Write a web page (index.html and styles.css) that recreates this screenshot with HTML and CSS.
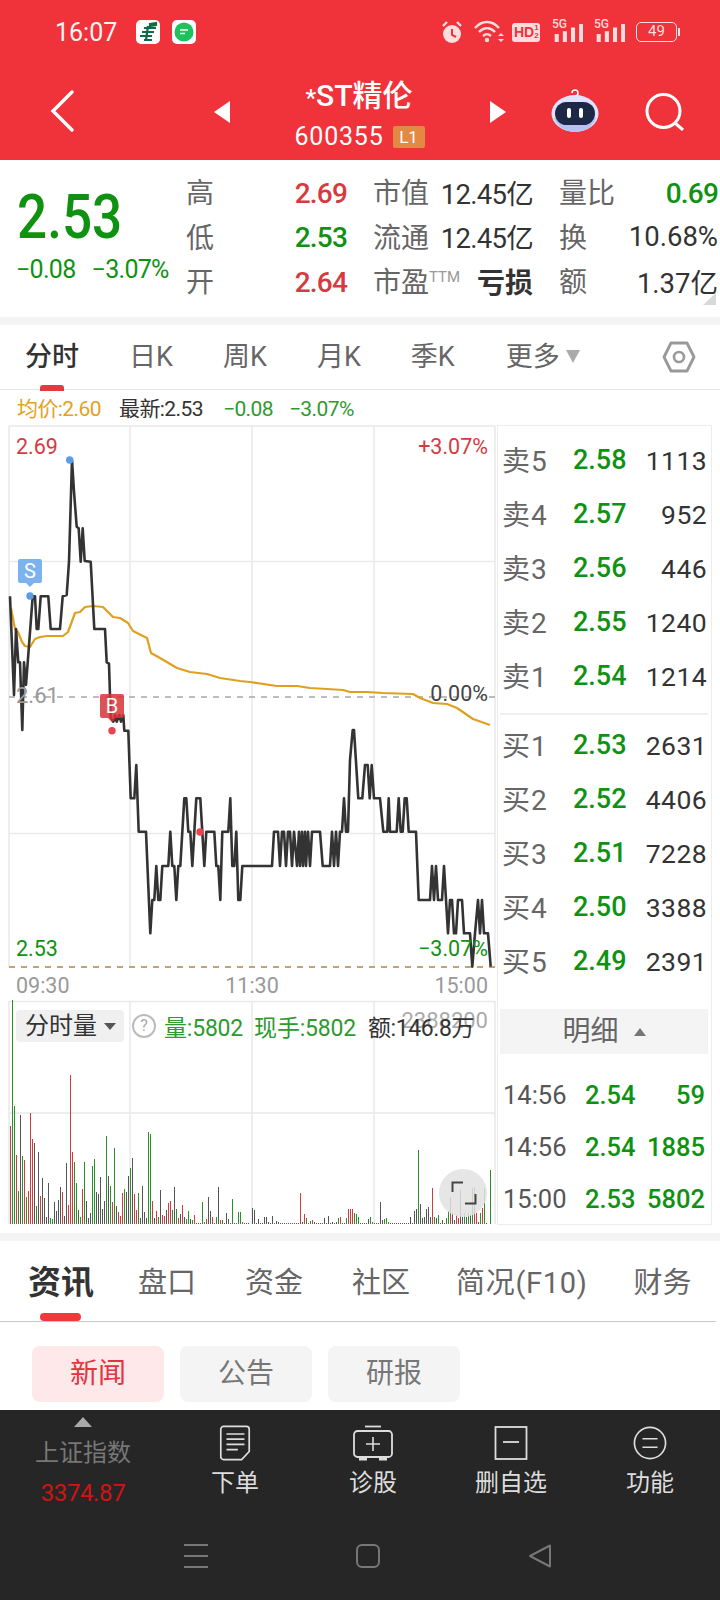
FILE: index.html
```html
<!DOCTYPE html>
<html lang="zh">
<head>
<meta charset="utf-8">
<title>*ST精伦</title>
<link rel="stylesheet" href="styles.css">
</head>
<body>
<div class="page">
  <header class="top">
    <div class="status">
      <span class="clock">16:07</span>
      <svg class="app" viewBox="0 0 24 24"><rect width="24" height="24" rx="5" fill="#fff"/><path d="M14 4l6-1v2l-6 1zM8 8h12M6 12h12M4 16h12M8 20h8M12 6l-2 14" stroke="#0d6b46" stroke-width="2.2" fill="none"/></svg>
      <svg class="app app2" viewBox="0 0 24 24"><rect width="24" height="24" rx="5" fill="#fff"/><circle cx="12" cy="12" r="9.5" fill="#1ec25a"/><path d="M8 10h8M8 13.5h5" stroke="#fff" stroke-width="1.6"/></svg>
      <span class="status-right">
        <svg class="st-alarm" viewBox="0 0 22 24"><circle cx="11" cy="14" r="9" fill="#fdd"/><path d="M11 9v6l4 2" stroke="#f0323b" stroke-width="2" fill="none"/><path d="M2 6l4-4M20 6l-4-4" stroke="#fdd" stroke-width="2.4"/></svg>
        <svg class="st-wifi" viewBox="0 0 30 24"><path d="M1 8c7-8 17-8 24 0M5 12c5-5 11-5 16 0M9 16c3-2.500 5-2.500 8 0" stroke="#fdd" stroke-width="2.400" fill="none"/><circle cx="13" cy="20" r="2.200" fill="#fdd"/><path d="M24 16l3-3 3 3zM24 19l3 3 3-3z" fill="#fdd"/></svg>
        <span class="st-hd">HD<small>1<br>2</small></span>
        <span class="st-sig"><b>5G</b><svg viewBox="0 0 32 20"><path d="M3 11v9M12 8v12M21 4v16M30 0v20" stroke="#fdd" stroke-width="4.500"/></svg></span>
        <span class="st-sig"><b>5G</b><svg viewBox="0 0 32 20"><path d="M3 11v9M12 8v12M21 4v16M30 0v20" stroke="#fdd" stroke-width="4.500"/></svg></span>
        <span class="st-bat"><span class="st-bat-body">49</span><i class="st-bat-tip"></i></span>
      </span>
    </div>
    <div class="nav">
      <svg class="back" viewBox="0 0 24 42"><path d="M22 2L3 21l19 19" stroke="#fff" stroke-width="3.400" fill="none" stroke-linecap="round"/></svg>
      <i class="tri-left"></i>
      <div class="title">
        <div class="name"><span class="star">*</span>ST精伦</div>
        <div class="code"><span>600355</span><span class="badge">L1</span></div>
      </div>
      <i class="tri-right"></i>
      <svg class="robot" viewBox="0 0 48 44"><path d="M21 5a3 3 0 1 1 3 3v2" stroke="#fff" stroke-width="1.600" fill="none"/><ellipse cx="24" cy="25.500" rx="23.500" ry="18.500" fill="#dfe3fb"/><path d="M3 30c3 9 12 14 21 14s18-5 21-14z" fill="#b9c1f2"/><rect x="4" y="14" width="40" height="23" rx="11.500" fill="#1d2746"/><rect x="16" y="20" width="4" height="10" rx="2" fill="#fff"/><rect x="28" y="20" width="4" height="10" rx="2" fill="#fff"/></svg>
      <svg class="search" viewBox="0 0 40 38"><circle cx="18.500" cy="18" r="16.500" stroke="#fff" stroke-width="3" fill="none"/><path d="M30 30l8 7" stroke="#fff" stroke-width="3"/></svg>
    </div>
  </header>

  <section class="quote">
    <div class="price-box">
      <div class="big">2.53</div>
      <div class="chg"><span>−0.08</span><span>−3.07%</span></div>
    </div>
    <div class="stats">
      <div class="cell"><span class="lb">高</span><span class="v1 red">2.69</span></div>
      <div class="cell"><span class="lb">市值</span><span class="v2 tight">12.45亿</span></div>
      <div class="cell"><span class="lb">量比</span><span class="v1 green">0.69</span></div>
      <div class="cell"><span class="lb">低</span><span class="v1 green">2.53</span></div>
      <div class="cell"><span class="lb">流通</span><span class="v2 tight">12.45亿</span></div>
      <div class="cell"><span class="lb">换</span><span class="v2">10.68%</span></div>
      <div class="cell"><span class="lb">开</span><span class="v1 red">2.64</span></div>
      <div class="cell"><span class="lb">市盈<sup class="ttm">TTM</sup></span><span class="v2 strong">亏损</span></div>
      <div class="cell"><span class="lb">额</span><span class="v2">1.37亿</span></div>
    </div>
    <i class="corner"></i>
  </section>
  <div class="strip strip-a"></div>

  <nav class="ktabs">
    <span class="ktab on">分时</span>
    <span class="ktab">日K</span>
    <span class="ktab">周K</span>
    <span class="ktab">月K</span>
    <span class="ktab">季K</span>
    <span class="ktab more">更多<i class="tri-more"></i></span>
    <svg class="hex" viewBox="0 0 34 32"><path d="M9 2h16l7 14-7 14H9L2 16z" stroke="#999" stroke-width="2.800" fill="none" stroke-linejoin="round"/><circle cx="17" cy="16" r="5" stroke="#999" stroke-width="2.600" fill="none"/></svg>
  </nav>

  <div class="info">
    <span class="orange">均价:2.60</span>
    <span class="dark">最新:2.53</span>
    <span class="green2">−0.08</span>
    <span class="green2">−3.07%</span>
  </div>

  <div class="board">
    <div class="left">
      <div class="pchart">
        <svg class="psvg" viewBox="8 425 488 545">
          <path class="grid" d="M9 426H495M9 561.500H495M9 833.500H495M9 426V967M130 426V967M252 426V967M374 426V967M495 426V967"/>
          <path class="midline" d="M9 697H495"/>
          <path class="lowline" d="M9 967H495"/>
          <path class="avg" d="M11 608L15 629L18 632L22 642L25 646L30 647L35 639L40 637L47 636L63 636L68 632L75 613L80 612L85 607L93 606L103 607L113 617L120 618L128 623L133 631L147 638L151 653L160 658L177 668L190 672L207 674L220 678L240 681L250 682L277 686L297 686L310 688L327 689L343 690L350 692L367 692L383 693L413 694L420 698L433 703L447 704L457 708L473 719L490 725"/>
          <path class="line" d="M10 596.300L14 695L16 629L18.300 662.300L20 662.300L22.300 730L24 662.300L26 685L32.700 596.300L35 596.300L36.700 629L38.300 629L40.700 596.300L48.300 596.300L50.700 629L60 629L62.700 596.300L66.700 595L69 561.700L72 460L74 491.700L76.700 526.700L78.700 528.300L80.700 561.700L82.700 528.300L84.700 561L90.700 561.700L94.300 629L105 629L106.700 662.300L109 663.700L110.700 718L113.300 721.700L115 715L116.700 721.700L119.300 715L121 721.700L123.300 715L124.300 730.700L128.300 730.700L130.700 798.300L134.300 798.300L136.300 765L138.700 831.700L146 831.700L150.300 933.300L152.300 900L154.300 900L156.300 866L158.300 900L160.300 900L162.300 866L168.300 866L170.300 831.700L172.300 866L174.300 866L176.300 900L178.300 866L180.300 866L184.300 798.300L186.300 798.300L188.300 831.700L190.300 831.700L192.300 866L196.300 798.300L200.300 798.300L204.300 866L206.300 831.700L214.300 831.700L216.300 866L218.300 866L220.300 900L222.300 831.700L228.300 831.700L230.300 798.300L232.300 866L234.300 866L236.300 831.700L238.300 900L240.300 900L242.300 866L272 866L274 831.700L278 831.700L280 866L282 831.700L284 831.700L286 866L288 831.700L290 831.700L292 866L294 831.700L297 866L299 831.700L300 866L302 831.700L303 866L305 831.700L306 866L308 831.700L310 866L312 831.700L320 831.700L322.700 866L330 866L332 831.700L334 866L336 831.700L338 866L340 831.700L342 831.700L344 798.300L346 831.700L348 831.700L350 760L352.700 730L354 730L358.300 798.300L362.300 798.300L365 765L367.700 765L369.700 798.300L371.700 765L374 798.300L380 798.300L383.300 831.700L387.300 831.700L388.700 798.300L390 831.700L396.700 831.700L398.700 798.300L400.700 831.700L402.700 831.700L404.700 798.300L406.700 798.300L408.700 831.700L416 831.700L418.700 900L430 900L432 866L434 900L436 866L438 900L442 900L444 866L448 933.300L450 900L452 900L454 933.300L456 933.300L458 900L462 900L464 933.300L470 933.300L472.300 966.700L475 933.300L478 900L480 933.300L482 900L484 933.300L488 933.300L490.700 966.700"/>
          <circle class="dot-blue" cx="69.700" cy="460" r="3.700"/>
          <circle class="dot-blue" cx="30" cy="596" r="3.700"/>
          <circle class="dot-red" cx="112" cy="730.700" r="3.700"/>
          <circle class="dot-red" cx="200" cy="832" r="3.700"/>
        </svg>
        <span class="lab lab-hi red">2.69</span>
        <span class="lab lab-pct-hi red">+3.07%</span>
        <span class="lab lab-mid">2.61</span>
        <span class="lab lab-zero">0.00%</span>
        <span class="lab lab-lo green">2.53</span>
        <span class="lab lab-pct-lo green">−3.07%</span>
        <span class="mark mark-s">S</span>
        <span class="mark mark-b">B</span>
      </div>
      <div class="times"><span>09:30</span><span>11:30</span><span>15:00</span></div>
      <div class="vchart">
        <svg class="vsvg" viewBox="8 1000 488 225">
          <path class="grid" d="M9 1001.500H495M9 1113H495M9 1001V1224M130 1001V1224M252 1001V1224M374 1001V1224M495 1001V1224"/>
          <path class="bar-r" d="M10.500 1126V1224M16.500 1155V1224M24.500 1160V1224M28.500 1191V1224M30.500 1113V1224M32.500 1139V1224M40.500 1196V1224M62.500 1192V1224M68.500 1205V1224M70.500 1075V1224M72.500 1152V1224M82.500 1189V1224M112.500 1202V1224M118.500 1212V1224M120.500 1216V1224M122.500 1193V1224M134.500 1194V1224M136.500 1210V1224M152.500 1201V1224M156.500 1211V1224M162.500 1215V1224M164.500 1216V1224M168.500 1203V1224M170.500 1201V1224M178.500 1218V1224M182.500 1205V1224M194.500 1215V1224M206.500 1219V1224M212.500 1217V1224M220.500 1220V1224M242.500 1222V1224M274.500 1223V1224M286.500 1223V1224M288.500 1223V1224M290.500 1223V1224M292.500 1223V1224M300.500 1193V1224M304.500 1214V1224M308.500 1223V1224M312.500 1220V1224M340.500 1217V1224M348.500 1209V1224M350.500 1209V1224M352.500 1209V1224M372.500 1222V1224M388.500 1222V1224M432.500 1188V1224M450.500 1197V1224M456.500 1215V1224M458.500 1218V1224M474.500 1187V1224M476.500 1213V1224M482.500 1208V1224"/>
          <path class="bar-g" d="M12.500 1000V1224M14.500 1106V1224M18.500 1191V1224M22.500 1156V1224M26.500 1197V1224M36.500 1206V1224M50.500 1218V1224M52.500 1219V1224M74.500 1162V1224M76.500 1183V1224M80.500 1217V1224M84.500 1162V1224M92.500 1166V1224M94.500 1159V1224M106.500 1136V1224M110.500 1186V1224M114.500 1148V1224M124.500 1189V1224M130.500 1168V1224M138.500 1193V1224M148.500 1132V1224M150.500 1134V1224M158.500 1217V1224M172.500 1210V1224M176.500 1209V1224M186.500 1219V1224M188.500 1211V1224M192.500 1220V1224M202.500 1202V1224M204.500 1222V1224M216.500 1217V1224M222.500 1220V1224M232.500 1199V1224M238.500 1212V1224M240.500 1212V1224M306.500 1218V1224M310.500 1221V1224M338.500 1218V1224M346.500 1218V1224M354.500 1213V1224M356.500 1214V1224M358.500 1217V1224M370.500 1217V1224M384.500 1219V1224M386.500 1218V1224M418.500 1150V1224M434.500 1217V1224M438.500 1215V1224M446.500 1218V1224M448.500 1211V1224M464.500 1213V1224M468.500 1213V1224M472.500 1188V1224M480.500 1213V1224M484.500 1188V1224M490.500 1170V1224"/>
          <path class="bar-k" d="M20.500 1115V1224M34.500 1143V1224M38.500 1152V1224M42.500 1178V1224M44.500 1198V1224M46.500 1217V1224M48.500 1183V1224M54.500 1202V1224M56.500 1211V1224M58.500 1200V1224M60.500 1187V1224M64.500 1216V1224M66.500 1163V1224M78.500 1210V1224M86.500 1201V1224M88.500 1218V1224M90.500 1213V1224M96.500 1192V1224M98.500 1194V1224M100.500 1177V1224M102.500 1209V1224M104.500 1201V1224M108.500 1176V1224M116.500 1206V1224M126.500 1192V1224M128.500 1176V1224M132.500 1158V1224M140.500 1218V1224M142.500 1186V1224M144.500 1212V1224M146.500 1218V1224M154.500 1218V1224M160.500 1190V1224M166.500 1210V1224M174.500 1187V1224M180.500 1214V1224M184.500 1217V1224M190.500 1219V1224M196.500 1223V1224M198.500 1223V1224M200.500 1223V1224M208.500 1197V1224M210.500 1211V1224M214.500 1223V1224M218.500 1187V1224M224.500 1223V1224M226.500 1213V1224M228.500 1219V1224M230.500 1223V1224M234.500 1223V1224M236.500 1223V1224M244.500 1223V1224M246.500 1223V1224M248.500 1223V1224M252.500 1208V1224M254.500 1210V1224M256.500 1223V1224M258.500 1219V1224M260.500 1223V1224M262.500 1223V1224M264.500 1217V1224M266.500 1217V1224M268.500 1222V1224M270.500 1223V1224M272.500 1216V1224M276.500 1221V1224M278.500 1222V1224M280.500 1223V1224M282.500 1223V1224M284.500 1223V1224M294.500 1223V1224M296.500 1223V1224M298.500 1223V1224M302.500 1222V1224M314.500 1222V1224M316.500 1223V1224M318.500 1223V1224M320.500 1223V1224M322.500 1223V1224M324.500 1218V1224M326.500 1223V1224M328.500 1216V1224M330.500 1223V1224M332.500 1222V1224M334.500 1223V1224M336.500 1222V1224M342.500 1223V1224M344.500 1223V1224M360.500 1223V1224M362.500 1223V1224M364.500 1223V1224M366.500 1223V1224M368.500 1219V1224M374.500 1223V1224M376.500 1223V1224M378.500 1223V1224M380.500 1202V1224M382.500 1220V1224M390.500 1223V1224M392.500 1223V1224M394.500 1223V1224M396.500 1223V1224M398.500 1223V1224M400.500 1223V1224M402.500 1223V1224M404.500 1223V1224M406.500 1223V1224M408.500 1223V1224M410.500 1217V1224M412.500 1223V1224M414.500 1211V1224M416.500 1209V1224M420.500 1204V1224M422.500 1218V1224M424.500 1217V1224M426.500 1209V1224M428.500 1207V1224M430.500 1217V1224M436.500 1218V1224M440.500 1223V1224M442.500 1220V1224M444.500 1223V1224M452.500 1213V1224M454.500 1220V1224M460.500 1190V1224M462.500 1217V1224M466.500 1217V1224M470.500 1215V1224M478.500 1222V1224M486.500 1223V1224"/>
          <circle class="zoom-bg" cx="463" cy="1193" r="24"/>
          <path class="zoom-mark" d="M463 1182.500H452.500V1192M465 1203.500H475.500V1194"/>
        </svg>
        <span class="ghost">2388200</span>
        <div class="vhead">
          <span class="vchip">分时量<i class="tri-chip"></i></span>
          <span class="qmark">?</span>
          <span class="vgreen">量:5802</span>
          <span class="vgreen">现手:5802</span>
          <span class="vdark">额:146.8万</span>
        </div>
      </div>
    </div>

    <aside class="book">
      <div class="asks">
        <div class="row"><span class="side">卖5</span><span class="pr">2.58</span><span class="qty">1113</span></div>
        <div class="row"><span class="side">卖4</span><span class="pr">2.57</span><span class="qty">952</span></div>
        <div class="row"><span class="side">卖3</span><span class="pr">2.56</span><span class="qty">446</span></div>
        <div class="row"><span class="side">卖2</span><span class="pr">2.55</span><span class="qty">1240</span></div>
        <div class="row"><span class="side">卖1</span><span class="pr">2.54</span><span class="qty">1214</span></div>
      </div>
      <div class="bids">
        <div class="row"><span class="side">买1</span><span class="pr">2.53</span><span class="qty">2631</span></div>
        <div class="row"><span class="side">买2</span><span class="pr">2.52</span><span class="qty">4406</span></div>
        <div class="row"><span class="side">买3</span><span class="pr">2.51</span><span class="qty">7228</span></div>
        <div class="row"><span class="side">买4</span><span class="pr">2.50</span><span class="qty">3388</span></div>
        <div class="row"><span class="side">买5</span><span class="pr">2.49</span><span class="qty">2391</span></div>
      </div>
      <div class="detail-head">明细<i class="tri-up"></i></div>
      <div class="ticks">
        <div class="tick"><span class="t">14:56</span><span class="tp">2.54</span><span class="tq">59</span></div>
        <div class="tick"><span class="t">14:56</span><span class="tp">2.54</span><span class="tq">1885</span></div>
        <div class="tick"><span class="t">15:00</span><span class="tp">2.53</span><span class="tq">5802</span></div>
      </div>
    </aside>
  </div>

  <div class="strip strip-b"></div>

  <nav class="ntabs">
    <span class="ntab on">资讯</span>
    <span class="ntab">盘口</span>
    <span class="ntab">资金</span>
    <span class="ntab">社区</span>
    <span class="ntab wide">简况(F10)</span>
    <span class="ntab">财务</span>
  </nav>

  <div class="chips">
    <span class="chip active">新闻</span>
    <span class="chip">公告</span>
    <span class="chip">研报</span>
  </div>

  <footer class="foot">
    <div class="actions">
      <div class="index">
        <i class="tri-index"></i>
        <span class="index-name">上证指数</span>
        <span class="index-val">3374.87</span>
      </div>
      <div class="act">
        <svg class="ic" viewBox="0 0 34 38"><path d="M5 1.500H29a3 3 0 0 1 3 3V28l-8 8.500H5a3 3 0 0 1-3-3V4.500a3 3 0 0 1 3-3z" stroke="#ddd" stroke-width="1.800" fill="none"/><path d="M8 9.500H27M8 15H27M8 20.500H27M8 26H20" stroke="#ddd" stroke-width="1.800"/></svg>
        <span>下单</span>
      </div>
      <div class="act">
        <svg class="ic ic-wide" viewBox="0 0 40 36"><path d="M12 1.500H28" stroke="#ddd" stroke-width="1.800"/><rect x="1" y="6" width="38" height="26" rx="3.500" stroke="#ddd" stroke-width="1.800" fill="none"/><path d="M13 19H27M20 12V26" stroke="#ddd" stroke-width="1.600"/><path d="M6 34h8M26 34h8" stroke="#ddd" stroke-width="3"/></svg>
        <span>诊股</span>
      </div>
      <div class="act">
        <svg class="ic" viewBox="0 0 34 36"><rect x="1.500" y="2" width="31" height="32" stroke="#ddd" stroke-width="1.800" fill="none"/><path d="M9 17H25" stroke="#ddd" stroke-width="1.800"/></svg>
        <span>删自选</span>
      </div>
      <div class="act">
        <svg class="ic" viewBox="0 0 36 36"><circle cx="18" cy="18" r="16.500" stroke="#ddd" stroke-width="1.800" fill="none"/><path d="M10 13.500H26M10 22.500H26" stroke="#ddd" stroke-width="1.800"/></svg>
        <span>功能</span>
      </div>
    </div>
    <div class="sysnav">
      <svg class="sys" viewBox="0 0 24 24"><path d="M0 1H24M0 12H24M0 23H24" stroke="#777" stroke-width="2"/></svg>
      <svg class="sys" viewBox="0 0 24 24"><rect x="1" y="1" width="22" height="22" rx="5" stroke="#777" stroke-width="2" fill="none"/></svg>
      <svg class="sys" viewBox="0 0 24 24"><path d="M22 1.500V22.500L2 12z" stroke="#777" stroke-width="2" fill="none" stroke-linejoin="round"/></svg>
    </div>
  </footer>
</div>
</body>
</html>
```
FILE: styles.css
```css
* { box-sizing: border-box; margin: 0; padding: 0; }
html, body { background: #fff; }
body { font-family: Roboto, "Noto Sans CJK SC", sans-serif; color: #333; }
i { display: block; font-style: normal; }
.page { width: 720px; height: 1600px; overflow: hidden; display: flex; flex-direction: column; position: relative; }

.red { color: #d63a3f; }
.green { color: #0f9212; }

/* header */
.top { height: 160px; background: #f0323b; color: #fff; flex: none; }
.status { height: 67px; padding: 20px 0 0 55px; display: flex; align-items: flex-start; }
.clock { font-size: 25px; line-height: 26px; width: 81px; color: #fff4f4; }
.app { width: 24px; height: 24px; }
.app2 { margin-left: 12px; }
.status-right { margin-left: auto; display: flex; align-items: center; height: 24px; padding-right: 40px; }
.st-alarm { width: 22px; height: 24px; margin-right: 11px; }
.st-wifi { width: 30px; height: 24px; margin-right: 8px; }
.st-hd { width: 28px; height: 19px; background: #fdd; color: #f0323b; border-radius: 3px; font: 700 14px/19px "Liberation Sans", sans-serif; display: flex; align-items: center; padding-left: 2px; margin-right: 12px; }
.st-hd small { font-size: 8px; line-height: 8px; }
.st-sig { width: 31px; height: 22px; position: relative; margin-right: 11px; }
.st-sig b { position: absolute; left: 0; top: -3px; font: 500 12px/12px Roboto, sans-serif; color: #fdd; }
.st-sig svg { position: absolute; left: 2px; top: 2px; width: 29px; height: 20px; }
.st-bat { display: flex; align-items: center; }
.st-bat-body { width: 41px; height: 20px; border: 1.500px solid #fdd; border-radius: 5px; font-size: 15px; line-height: 17px; color: #fdd; text-align: center; }
.st-bat-tip { width: 2px; height: 8px; background: #fdd; margin-left: 1px; }

.nav { height: 93px; display: flex; align-items: flex-start; position: relative; padding-left: 50px; }
.back { width: 24px; height: 42px; margin-top: 23px; }
.tri-left { margin: 34px 0 0 140px; width: 0; height: 0; border-style: solid; border-width: 11px 16px 11px 0; border-color: transparent #fff transparent transparent; }
.title { width: 260px; text-align: center; color: #fff; margin-top: 13px; }
.name { font-size: 30px; line-height: 32px; font-weight: 500; margin-left: -2px; }
.star { font-size: 24px; }
.code { display: flex; justify-content: center; align-items: center; font-size: 25px; line-height: 22px; margin-top: 12px; margin-left: -1px; letter-spacing: .8px; }
.badge { background: #e28a44; color: #fff; width: 32px; height: 22px; border-radius: 2px; font-size: 17px; line-height: 22px; text-align: center; margin-left: 9px; letter-spacing: 0; }
.tri-right { margin-top: 34px; width: 0; height: 0; border-style: solid; border-width: 11px 0 11px 16px; border-color: transparent transparent transparent #fff; }
.robot { width: 48px; height: 44px; margin: 21px 0 0 45px; }
.search { width: 40px; height: 38px; margin: 26px 0 0 46px; }

/* quote */
.quote { height: 157px; flex: none; display: flex; padding-left: 17px; position: relative; }
.price-box { width: 170px; }
.big { font-size: 61px; line-height: 50px; font-weight: 500; color: #0f9212; margin-top: 32px; transform: scaleX(.87); transform-origin: left center; width: 130px; }
.chg { display: flex; gap: 16px; font-size: 25px; line-height: 28px; color: #0f9212; margin-top: 14px; letter-spacing: -.7px; margin-left: -1px; }
.stats { display: grid; grid-template-columns: 160px 159px 158px; column-gap: 27px; grid-auto-rows: 44.500px; padding-top: 11px; }
.cell { display: flex; justify-content: space-between; align-items: center; }
.lb { font-size: 28px; color: #666; line-height: 44px; white-space: nowrap; padding-top: 2px; margin-left: -1px; }
.v1 { font-size: 28px; font-weight: 500; letter-spacing: -.8px; }
.v2 { font-size: 27.500px; color: #333; padding-bottom: 3px; }
.tight { letter-spacing: -.7px; }
.strong { font-weight: 700; font-size: 28px; }
.ttm { font-size: 15px; color: #999; vertical-align: 10px; line-height: 0; }
.corner { position: absolute; right: 4px; top: 133px; width: 0; height: 0; border-style: solid; border-width: 0 0 12px 13px; border-color: transparent transparent #d8d8d8 transparent; }

.strip { background: #f4f4f4; flex: none; }
.strip-a { height: 8px; }
.strip-b { height: 8px; margin-top: 8px; }

/* k tabs */
.ktabs { height: 65px; flex: none; display: flex; align-items: center; padding: 0 24px 0 25px; border-bottom: 1px solid #e6e6e6; gap: 50px; position: relative; }
.ktab { font-size: 27px; color: #666; position: relative; line-height: 40px; margin-bottom: 1px; white-space: nowrap; }
.ktab.on { color: #333; font-weight: 500; }
.ktab.on::after { content: ""; position: absolute; left: 15px; top: 48px; width: 24px; height: 6px; border-radius: 3px 3px 0 0; background: #e23a3f; }
.more { display: flex; align-items: center; margin-left: 1px; }
.tri-more { margin-left: 6px; width: 0; height: 0; border-style: solid; border-width: 13px 7px 0 7px; border-color: #aaa transparent transparent transparent; }
.hex { width: 34px; height: 32px; margin-left: auto; }

.info { height: 35px; flex: none; display: flex; padding-left: 17px; font-size: 21px; line-height: 38px; letter-spacing: -.6px; }
.orange { color: #e5a11d; width: 102px; }
.dark { color: #333; width: 104px; }
.green2 { color: #2e9a2e; }
.green2 + .green2 { margin-left: 16px; }

/* board */
.board { height: 800px; flex: none; display: flex; }
.left { width: 488px; margin-left: 8px; display: flex; flex-direction: column; }
.pchart { height: 545px; position: relative; }
.psvg { display: block; width: 488px; height: 545px; }
.grid { stroke: #e9e9e9; stroke-width: 1.500; fill: none; }
.midline { stroke: #a6a6a6; stroke-width: 1.500; stroke-dasharray: 6 6; fill: none; }
.lowline { stroke: #c9a06e; stroke-width: 2; stroke-dasharray: 6 6; fill: none; }
.avg { stroke: #dfa01e; stroke-width: 2.200; fill: none; stroke-linejoin: round; }
.line { stroke: #333; stroke-width: 2.600; fill: none; stroke-linejoin: round; }
.dot-blue { fill: #5b9ce6; }
.dot-red { fill: #e54450; }
.lab { position: absolute; font-size: 21.500px; line-height: 24px; white-space: nowrap; }
.lab-hi { left: 8px; top: 10px; }
.lab-pct-hi { right: 8px; top: 10px; }
.lab-mid { left: 8px; top: 259px; color: #999; font-size: 22px; }
.lab-zero { right: 8px; top: 257px; color: #444; }
.lab-lo { left: 8px; top: 512px; }
.lab-pct-lo { right: 8px; top: 512px; }
.mark { position: absolute; width: 24px; height: 24px; border-radius: 2px; color: #fff; font-size: 20px; line-height: 24px; text-align: center; }
.mark::after { content: ""; position: absolute; left: 8px; top: 24px; border-style: solid; border-width: 4px 4px 0 4px; border-color: inherit; }
.mark-s { left: 10px; top: 134px; background: #7db2f0; border-color: #7db2f0 transparent transparent transparent; }
.mark-b { left: 92px; top: 269px; background: rgba(214, 52, 58, .85); border-color: rgba(214, 52, 58, .85) transparent transparent transparent; }

.times { height: 30px; flex: none; display: flex; justify-content: space-between; padding: 2px 8px 0 8px; font-size: 21.500px; line-height: 27px; color: #999; }
.vchart { height: 225px; position: relative; }
.vsvg { display: block; width: 488px; height: 225px; }
.bar-r { stroke: #cf3b3f; stroke-width: 1; fill: none; }
.bar-g { stroke: #2c8f2c; stroke-width: 1; fill: none; }
.bar-k { stroke: #555; stroke-width: 1; fill: none; }
.zoom-bg { fill: rgba(226, 226, 226, .85); }
.zoom-mark { stroke: #444; stroke-width: 2; fill: none; }
.vhead { position: absolute; left: 8px; top: 9px; display: flex; align-items: center; white-space: nowrap; }
.vchip { width: 108px; height: 32px; background: #f0f0f0; border-radius: 4px; font-size: 24px; line-height: 32px; padding-left: 9px; display: flex; align-items: center; color: #333; }
.tri-chip { margin-left: 7px; width: 0; height: 0; border-style: solid; border-width: 7px 6px 0 6px; border-color: #555 transparent transparent transparent; }
.qmark { width: 24px; height: 24px; border: 2px solid #bbb; border-radius: 50%; color: #aaa; font-size: 16px; line-height: 20px; text-align: center; margin-left: 8px; }
.vgreen { font-size: 23px; color: #2e9a2e; margin-left: 8px; letter-spacing: -.2px; }
.vgreen + .vgreen { margin-left: 11px; }
.vdark { font-size: 23px; color: #333; margin-left: 12px; letter-spacing: -.4px; }
.ghost { position: absolute; right: 8px; top: 9px; font-size: 22px; color: #aaa; line-height: 24px; }

/* order book */
.book { width: 215px; margin-left: 1px; border: 1.500px solid #ececec; display: flex; flex-direction: column; padding: 0 3px 0 2px; }
.asks { border-bottom: 2px solid #f0f0f0; padding: 7px 0 10px; }
.bids { padding-top: 3px; }
.row { height: 54px; display: flex; align-items: center; padding-left: 2px; }
.side { font-size: 28px; color: #666; width: 71px; white-space: nowrap; padding-bottom: 3px; letter-spacing: 1px; }
.pr { font-size: 27px; font-weight: 500; color: #0f9212; width: 54px; }
.qty { font-size: 26.500px; color: #333; margin-left: auto; letter-spacing: .4px; padding-right: 1px; }
.detail-head { height: 45px; background: #f4f4f4; margin-top: 21px; font-size: 28px; line-height: 45px; color: #666; display: flex; align-items: center; justify-content: center; }
.tri-up { margin-left: 15px; width: 0; height: 0; border-style: solid; border-width: 0 6px 8px 6px; border-color: transparent transparent #777 transparent; }
.ticks { padding-top: 15px; }
.tick { height: 52px; display: flex; align-items: center; padding: 0 3px 0 3px; font-size: 25.500px; }
.t { color: #555; width: 82px; }
.tp { color: #0f9212; font-weight: 500; }
.tq { color: #0f9212; font-weight: 500; margin-left: auto; }

/* news tabs */
.ntabs { height: 81px; flex: none; display: flex; align-items: center; padding: 4px 0 0 28px; margin-right: 4px; border-bottom: 1px solid #c8c8c8; gap: 49px; position: relative; }
.ntab { font-size: 29px; color: #666; line-height: 40px; white-space: nowrap; }
.ntab.wide { letter-spacing: .7px; margin: 0 -3px; }
.ntab.on { font-size: 33px; font-weight: 700; color: #333; position: relative; margin-right: -5px; }
.ntab.on::after { content: ""; position: absolute; left: 12px; top: 50px; width: 41px; height: 8px; border-radius: 4px; background: #f4373c; }

.chips { height: 88px; flex: none; display: flex; gap: 16px; padding: 24px 0 0 32px; }
.chip { width: 132px; height: 56px; border-radius: 8px; background: #f4f4f4; color: #777; font-size: 28px; line-height: 56px; text-align: center; }
.chip.active { background: #ffe8ea; color: #e2343e; }

/* footer */
.foot { flex: 1; background: #262626; display: flex; flex-direction: column; }
.actions { display: grid; grid-template-columns: 166px 138px 138px 138px 140px; height: 134px; }
.index { display: flex; flex-direction: column; align-items: center; padding-top: 7px; }
.tri-index { width: 0; height: 0; border-style: solid; border-width: 0 9px 10px 9px; border-color: transparent transparent #aaa transparent; }
.index-name { font-size: 24px; line-height: 30px; color: #777; margin-top: 11px; }
.index-val { font-size: 24px; line-height: 30px; color: #d01414; margin-top: 10px; letter-spacing: -.4px; }
.act { display: flex; flex-direction: column; align-items: center; color: #ddd; font-size: 24px; line-height: 30px; padding-top: 15px; }
.ic { width: 34px; height: 36px; margin-bottom: 7px; flex: none; }
.ic-wide { width: 40px; }
.sysnav { display: flex; gap: 148px; padding-left: 184px; }
.sys { width: 24px; height: 24px; }
```
